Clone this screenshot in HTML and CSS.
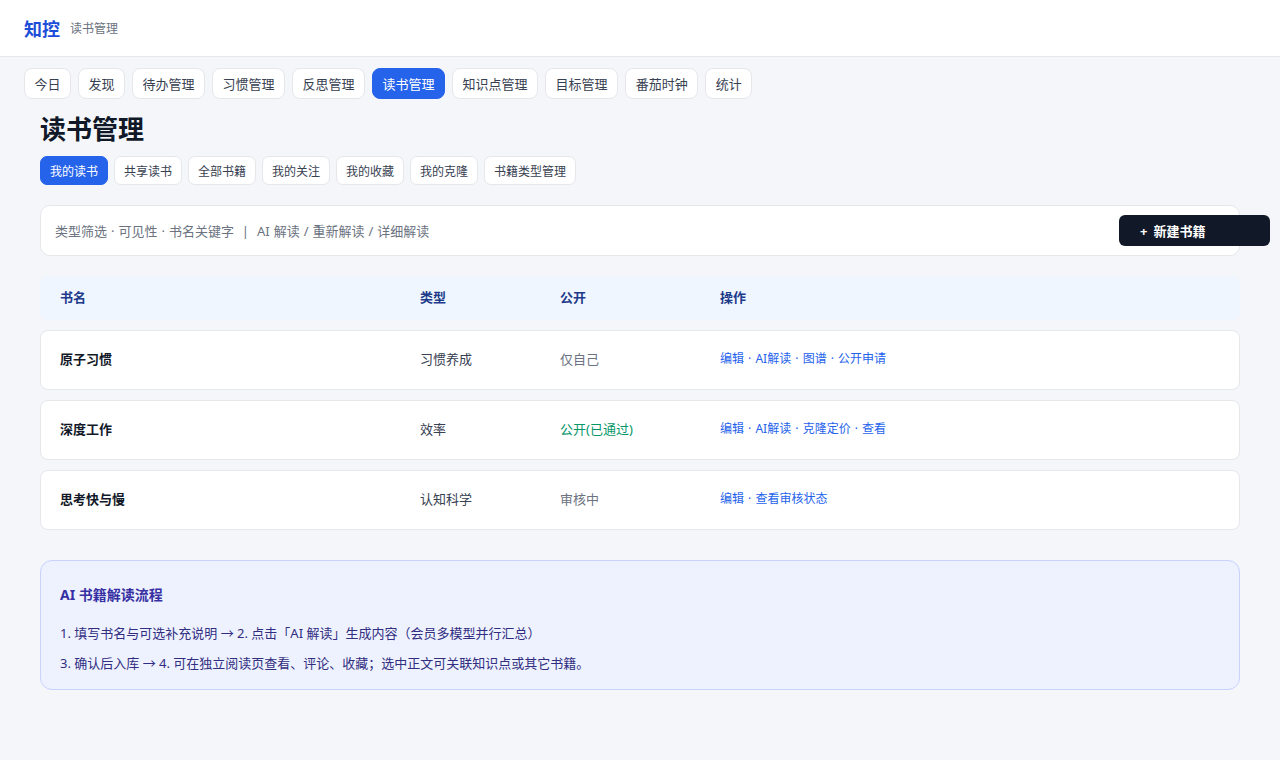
FILE: index.html
```html
<!DOCTYPE html>
<html lang="zh-CN">
<head>
<meta charset="utf-8">
<title>知控 - 读书管理</title>
<link rel="stylesheet" href="styles.css">
</head>
<body>
<header class="topbar">
  <span class="logo">知控</span>
  <span class="subtitle">读书管理</span>
</header>
<nav class="nav">
  <a class="tab">今日</a>
  <a class="tab">发现</a>
  <a class="tab">待办管理</a>
  <a class="tab">习惯管理</a>
  <a class="tab">反思管理</a>
  <a class="tab active">读书管理</a>
  <a class="tab">知识点管理</a>
  <a class="tab">目标管理</a>
  <a class="tab">番茄时钟</a>
  <a class="tab">统计</a>
</nav>
<main class="main">
  <h1 class="title">读书管理</h1>
  <div class="subtabs">
    <a class="subtab active">我的读书</a>
    <a class="subtab">共享读书</a>
    <a class="subtab">全部书籍</a>
    <a class="subtab">我的关注</a>
    <a class="subtab">我的收藏</a>
    <a class="subtab">我的克隆</a>
    <a class="subtab">书籍类型管理</a>
  </div>
  <div class="filter">
    <span class="filter-text">类型筛选 · 可见性 · 书名关键字 &nbsp;|&nbsp; AI 解读 / 重新解读 / 详细解读</span>
    <button class="new-btn"><span class="plus">+</span>新建书籍</button>
  </div>
  <div class="thead row-grid">
    <span>书名</span><span>类型</span><span>公开</span><span>操作</span>
  </div>
  <div class="trow row-grid">
    <span class="name">原子习惯</span>
    <span class="type">习惯养成</span>
    <span class="status">仅自己</span>
    <span class="ops">编辑 · AI解读 · 图谱 · 公开申请</span>
  </div>
  <div class="trow row-grid">
    <span class="name">深度工作</span>
    <span class="type">效率</span>
    <span class="status ok">公开(已通过)</span>
    <span class="ops">编辑 · AI解读 · 克隆定价 · 查看</span>
  </div>
  <div class="trow row-grid">
    <span class="name">思考快与慢</span>
    <span class="type">认知科学</span>
    <span class="status">审核中</span>
    <span class="ops">编辑 · 查看审核状态</span>
  </div>
  <section class="info">
    <h2 class="info-title">AI 书籍解读流程</h2>
    <p class="info-line">1. 填写书名与可选补充说明 → 2. 点击「AI 解读」生成内容（会员多模型并行汇总）</p>
    <p class="info-line">3. 确认后入库 → 4. 可在独立阅读页查看、评论、收藏；选中正文可关联知识点或其它书籍。</p>
  </section>
</main>
</body>
</html>
```
FILE: styles.css
```css
* { box-sizing: border-box; }
html, body { margin: 0; padding: 0; }
body {
  background: #f5f6fa;
  font-family: "Noto Sans", "Noto Sans CJK SC", sans-serif;
  color: #111827;
  width: 1280px;
  height: 760px;
  overflow: hidden;
}
.topbar {
  height: 57px;
  background: #fff;
  border-bottom: 1px solid #e5e7eb;
  display: flex;
  align-items: center;
  padding: 0 24px;
  gap: 10px;
}
.logo {
  font-size: 18px;
  font-weight: 700;
  color: #1d4ed8;
}
.subtitle {
  font-size: 12px;
  color: #6b7280;
}
.nav {
  display: flex;
  gap: 7px;
  padding: 11px 24px 0;
}
.tab {
  height: 31px;
  display: flex;
  align-items: center;
  padding: 0 9.5px;
  font-size: 13px;
  color: #374151;
  background: #fff;
  border: 1px solid #e5e7eb;
  border-radius: 8px;
}
.tab.active {
  background: #2563eb;
  border-color: #2563eb;
  color: #fff;
}
.main {
  padding: 12px 40px 0;
}
.title {
  margin: 0;
  font-size: 26px;
  line-height: 36px;
  font-weight: 700;
  color: #111827;
}
.subtabs {
  display: flex;
  gap: 6px;
  margin-top: 9px;
}
.subtab {
  height: 29px;
  display: flex;
  align-items: center;
  padding: 0 9px;
  font-size: 12px;
  color: #374151;
  background: #fff;
  border: 1px solid #e5e7eb;
  border-radius: 7px;
}
.subtab.active {
  background: #2563eb;
  border-color: #2563eb;
  color: #fff;
}
.filter {
  margin-top: 20px;
  height: 51px;
  background: #fff;
  border: 1px solid #e5e7eb;
  border-radius: 10px;
  display: flex;
  align-items: center;
  padding: 0 14px;
}
.filter-text {
  font-size: 13px;
  color: #6b7280;
  word-spacing: 0.6px;
}
.new-btn {
  margin-left: auto;
  margin-right: -45px;
  width: 151px;
  height: 31px;
  background: #111827;
  color: #fff;
  border: none;
  border-radius: 6px;
  font-family: inherit;
  font-size: 13px;
  font-weight: 700;
  text-align: left;
  padding: 0 0 0 21px;
}
.plus {
  margin-right: 6px;
}
.row-grid {
  display: grid;
  grid-template-columns: 360px 140px 160px 1fr;
  align-items: center;
  padding: 0 19px 4px;
}
.thead {
  margin-top: 20px;
  height: 44px;
  background: #eff6ff;
  border-radius: 8px;
  font-size: 13px;
  font-weight: 700;
  color: #1e3a8a;
  padding-left: 20px;
}
.trow {
  margin-top: 10px;
  height: 60px;
  background: #fff;
  border: 1px solid #e5e7eb;
  border-radius: 8px;
  font-size: 13px;
}
.name {
  font-weight: 700;
  color: #111827;
}
.type { color: #374151; }
.status { color: #6b7280; }
.status.ok { color: #059669; }
.ops {
  font-size: 12px;
  color: #2563eb;
  word-spacing: 1px;
}
.info {
  margin-top: 30px;
  height: 130px;
  background: #eef2ff;
  border: 1px solid #c7d2fe;
  border-radius: 12px;
  padding: 22px 19px 0;
}
.info-title {
  margin: 0;
  font-size: 14px;
  line-height: 24px;
  font-weight: 700;
  color: #3730a3;
}
.info-line {
  margin: 0;
  font-size: 13px;
  line-height: 30px;
  color: #312e81;
}
.info-title + .info-line { margin-top: 11px; }
```
